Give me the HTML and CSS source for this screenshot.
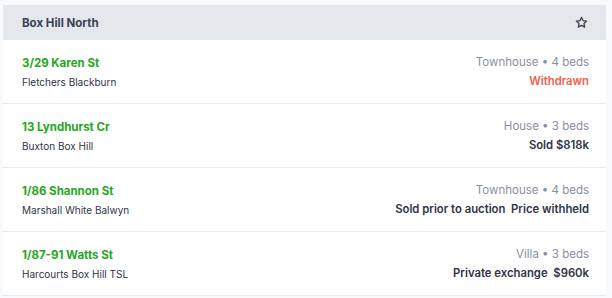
FILE: index.html
```html
<!DOCTYPE html>
<html lang="en">
<head>
    <meta charset="UTF-8">
    <meta name="viewport" content="width=device-width, initial-scale=1.0">
    <title>Box Hill North</title>
    <link rel="stylesheet" href="styles.css">
</head>
<body>
    <div class="card">
        <div class="card-header">
            <h2>Box Hill North</h2>
            <button class="star" aria-label="Save suburb">
                <svg width="13" height="13" viewBox="0 0 24 24" fill="none" stroke="currentColor" stroke-width="2.4" stroke-linejoin="round">
                    <polygon points="12,2.5 14.9,8.6 21.5,9.4 16.6,14 17.9,20.6 12,17.3 6.1,20.6 7.4,14 2.5,9.4 9.1,8.6"/>
                </svg>
            </button>
        </div>
        <ul class="listings">
            <li class="listing">
                <div class="left">
                    <div class="address">3/29 Karen St</div>
                    <div class="agent">Fletchers Blackburn</div>
                </div>
                <div class="right">
                    <div class="meta">Townhouse &bull; 4 beds</div>
                    <div class="status withdrawn">Withdrawn</div>
                </div>
            </li>
            <li class="listing">
                <div class="left">
                    <div class="address">13 Lyndhurst Cr</div>
                    <div class="agent">Buxton Box Hill</div>
                </div>
                <div class="right">
                    <div class="meta">House &bull; 3 beds</div>
                    <div class="status">Sold $818k</div>
                </div>
            </li>
            <li class="listing">
                <div class="left">
                    <div class="address">1/86 Shannon St</div>
                    <div class="agent">Marshall White Balwyn</div>
                </div>
                <div class="right">
                    <div class="meta">Townhouse &bull; 4 beds</div>
                    <div class="status">Sold prior to auction&nbsp; Price withheld</div>
                </div>
            </li>
            <li class="listing">
                <div class="left">
                    <div class="address">1/87-91 Watts St</div>
                    <div class="agent">Harcourts Box Hill TSL</div>
                </div>
                <div class="right">
                    <div class="meta">Villa &bull; 3 beds</div>
                    <div class="status">Private exchange&nbsp; $960k</div>
                </div>
            </li>
        </ul>
    </div>
</body>
</html>
```

FILE: styles.css
```css
body {
    margin: 0;
    padding: 5px 6px 0 3px;
    font-family: Inter, "Noto Sans", sans-serif;
    background-color: #f8f9fb;
    color: #2f3446;
}
.card {
    background: white;
    border-radius: 2px 2px 0 0;
}
.card-header {
    display: flex;
    justify-content: space-between;
    align-items: center;
    height: 35px;
    padding: 0 18px 0 19px;
    background-color: #e4e7ec;
}
.card-header h2 {
    margin: 0;
    font-size: 11.5px;
    font-weight: 700;
    color: #3b4152;
}
.star {
    display: flex;
    padding: 0;
    border: none;
    background: none;
    color: #3b4152;
}
.listings {
    margin: 0;
    padding: 0;
    list-style: none;
}
.listing {
    display: flex;
    justify-content: space-between;
    align-items: center;
    height: 63px;
    padding: 0 17px 0 19px;
    border-bottom: 1px solid #e8eaee;
}
.address {
    font-size: 11.5px;
    font-weight: 700;
    color: #25a823;
}
.agent {
    margin-top: 6px;
    font-size: 10px;
    color: #2f3446;
}
.right {
    text-align: right;
}
.meta {
    font-size: 11.5px;
    color: #8b8f9d;
}
.status {
    margin-top: 5px;
    font-size: 11.3px;
    font-weight: 600;
    color: #2f3446;
}
.status.withdrawn {
    color: #f4604e;
}
```
